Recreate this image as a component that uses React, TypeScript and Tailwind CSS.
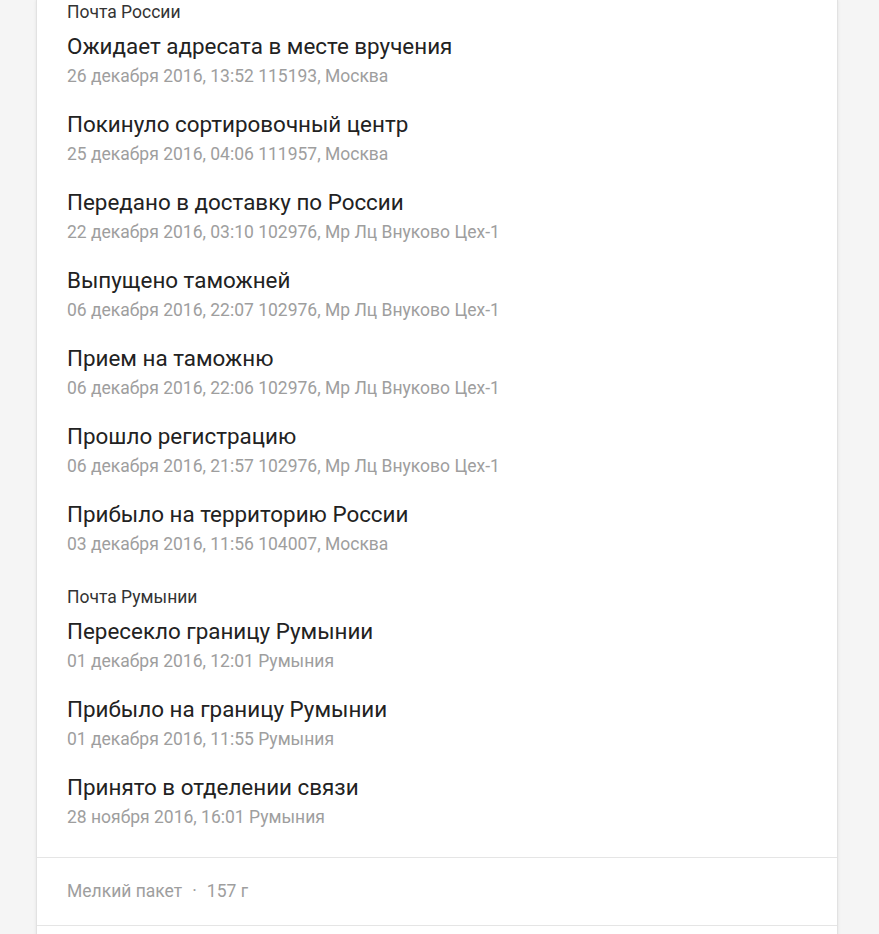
import React from "react";

type Ev = { t: string; d: string };

const sections: { name: string; events: Ev[] }[] = [
  {
    name: "Почта России",
    events: [
      { t: "Ожидает адресата в месте вручения", d: "26 декабря 2016, 13:52 115193, Москва" },
      { t: "Покинуло сортировочный центр", d: "25 декабря 2016, 04:06 111957, Москва" },
      { t: "Передано в доставку по России", d: "22 декабря 2016, 03:10 102976, Мр Лц Внуково Цех-1" },
      { t: "Выпущено таможней", d: "06 декабря 2016, 22:07 102976, Мр Лц Внуково Цех-1" },
      { t: "Прием на таможню", d: "06 декабря 2016, 22:06 102976, Мр Лц Внуково Цех-1" },
      { t: "Прошло регистрацию", d: "06 декабря 2016, 21:57 102976, Мр Лц Внуково Цех-1" },
      { t: "Прибыло на территорию России", d: "03 декабря 2016, 11:56 104007, Москва" },
    ],
  },
  {
    name: "Почта Румынии",
    events: [
      { t: "Пересекло границу Румынии", d: "01 декабря 2016, 12:01 Румыния" },
      { t: "Прибыло на границу Румынии", d: "01 декабря 2016, 11:55 Румыния" },
      { t: "Принято в отделении связи", d: "28 ноября 2016, 16:01 Румыния" },
    ],
  },
];

export default function App() {
  return (
    <div
      className="min-h-[934px] h-[934px] overflow-hidden bg-[#f5f5f5]"
      style={{ fontFamily: "Roboto, 'Noto Sans', Arial, sans-serif" }}
    >
      <div className="ml-[36px] w-[802px] bg-white border-x border-[#e2e2e2] shadow-[0_0_3px_rgba(0,0,0,0.08)]">
        <div className="px-[30px] pt-[2px] pb-[8px]">
          {sections.map((s, si) => (
            <div key={si} className={si > 0 ? "pt-[11px]" : ""}>
              <div className="text-[17.5px] leading-[20px] text-[#333333] mb-[8px]">{s.name}</div>
              {s.events.map((e, ei) => (
                <div key={ei} className="pb-[18px]">
                  <div className="text-[22.4px] leading-[32px] text-[#222222]">{e.t}</div>
                  <div className="text-[17.5px] leading-[28px] text-[#9e9e9e]">{e.d}</div>
                </div>
              ))}
            </div>
          ))}
        </div>
        <div className="border-t border-[#e5e5e5] h-[68px] flex items-center px-[30px] text-[17.5px] text-[#9e9e9e]">
          <span>Мелкий пакет</span>
          <span className="mx-[10px]">·</span>
          <span>157 г</span>
        </div>
        <div className="border-t border-[#e5e5e5] h-[40px]"></div>
      </div>
    </div>
  );
}
